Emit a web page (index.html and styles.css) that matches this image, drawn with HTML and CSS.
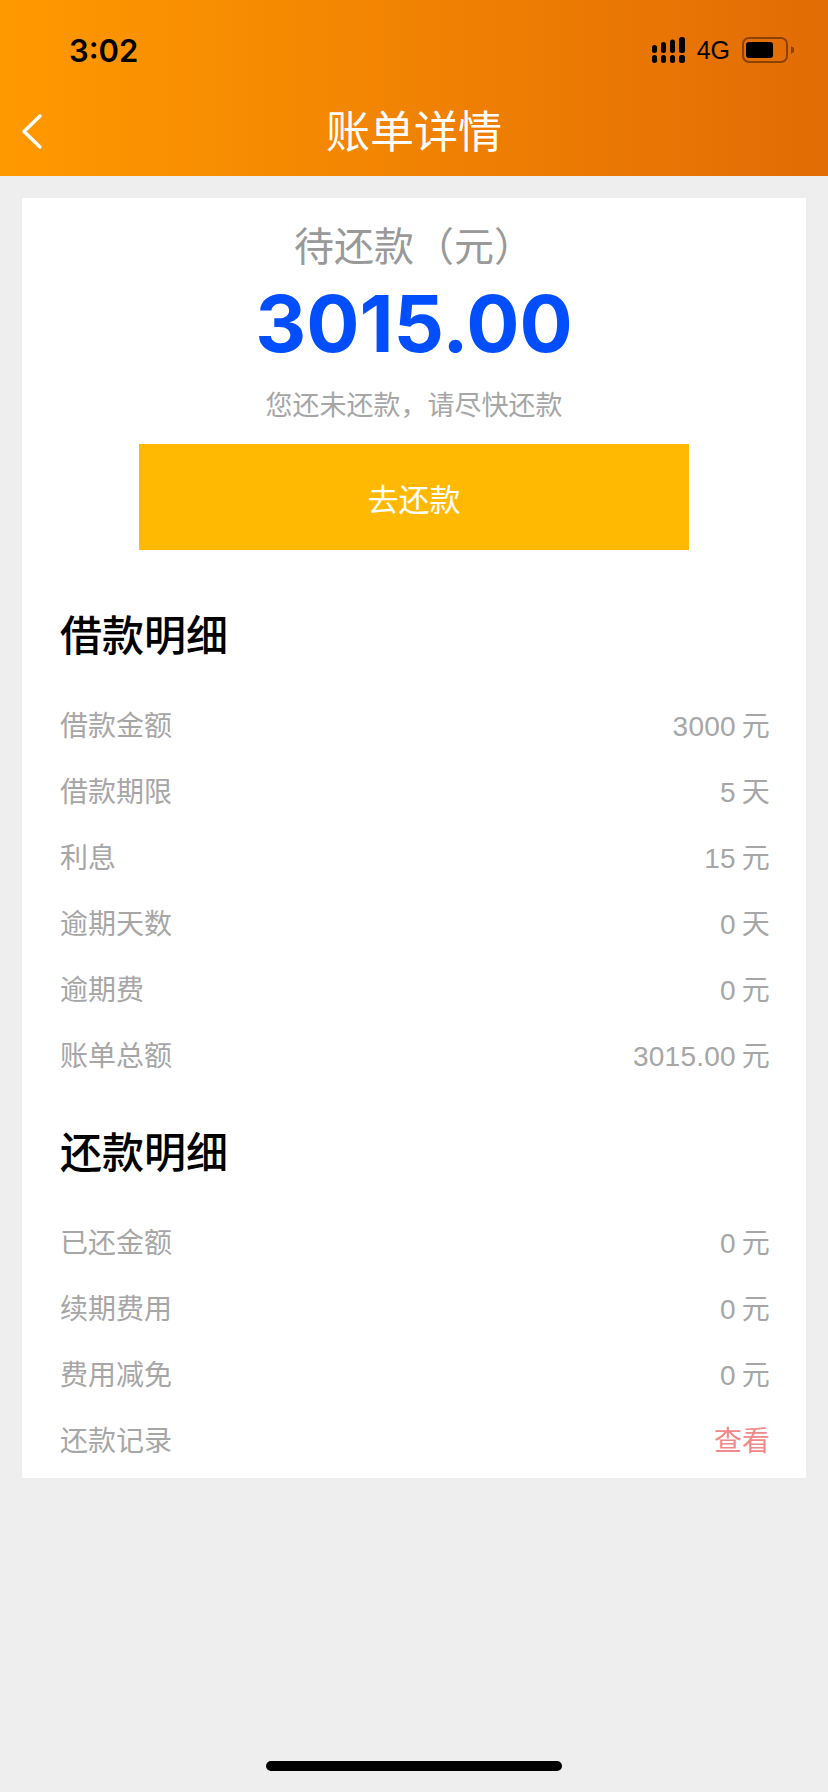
FILE: index.html
```html
<!DOCTYPE html>
<html lang="zh-CN">

<head>
    <meta charset="utf-8">
    <meta name="viewport" content="width=device-width, initial-scale=1.0">
    <title>账单详情</title>
    <link rel="stylesheet" href="styles.css">
</head>

<body>
    <header class="top">
        <div class="status">
            <span class="time">3:02</span>
            <div class="status-right">
                <svg class="signal" width="33" height="26" viewBox="0 0 33 26">
                    <rect x="0" y="8" width="5" height="8" rx="2.500" />
                    <rect x="9" y="5" width="5" height="11" rx="2.500" />
                    <rect x="18" y="2.500" width="5" height="13.500" rx="2.500" />
                    <rect x="27" y="0" width="6" height="16" rx="2.500" />
                    <rect x="0" y="18" width="5" height="8" rx="2.500" />
                    <rect x="9" y="18" width="5" height="8" rx="2.500" />
                    <rect x="18" y="18" width="5" height="8" rx="2.500" />
                    <rect x="27" y="18" width="6" height="8" rx="2.500" />
                </svg>
                <span class="net">4G</span>
                <svg class="battery" width="52" height="26" viewBox="0 0 52 26">
                    <rect x="1" y="1" width="44" height="24" rx="6" fill="none" stroke="#000" stroke-opacity="0.4" stroke-width="2" />
                    <rect x="4" y="5" width="27" height="16" rx="3" />
                    <path d="M49 9 L52 11 L52 15 L49 17 Z" fill="#000" fill-opacity="0.4" />
                </svg>
            </div>
        </div>
        <div class="nav">
            <svg class="back" width="24" height="38" viewBox="0 0 24 38">
                <path d="M20 4 L4 19.500 L20 35" fill="none" stroke="#fff" stroke-width="3.500" stroke-linecap="round" stroke-linejoin="round" />
            </svg>
            <h1>账单详情</h1>
        </div>
    </header>

    <main class="card">
        <section class="summary">
            <div class="due-label">待还款（元）</div>
            <div class="due-amount">3015.00</div>
            <div class="due-note">您还未还款，请尽快还款</div>
            <button class="pay">去还款</button>
        </section>

        <section class="detail">
            <h2>借款明细</h2>
            <div class="row"><span>借款金额</span><span class="val">3000&thinsp;元</span></div>
            <div class="row"><span>借款期限</span><span class="val">5&thinsp;天</span></div>
            <div class="row"><span>利息</span><span class="val">15&thinsp;元</span></div>
            <div class="row"><span>逾期天数</span><span class="val">0&thinsp;天</span></div>
            <div class="row"><span>逾期费</span><span class="val">0&thinsp;元</span></div>
            <div class="row"><span>账单总额</span><span class="val">3015.00&thinsp;元</span></div>
        </section>

        <section class="detail">
            <h2>还款明细</h2>
            <div class="row"><span>已还金额</span><span class="val">0&thinsp;元</span></div>
            <div class="row"><span>续期费用</span><span class="val">0&thinsp;元</span></div>
            <div class="row"><span>费用减免</span><span class="val">0&thinsp;元</span></div>
            <div class="row"><span>还款记录</span><span class="link">查看</span></div>
        </section>
    </main>

    <div class="home-bar"></div>
</body>

</html>
```

FILE: styles.css
```css
html {
    height: 100%;
}

body {
    margin: 0;
    min-height: 1792px;
    display: flex;
    flex-direction: column;
    background-color: #eeeeee;
    font-family: "Liberation Sans", "Noto Sans CJK SC", sans-serif;
}

.top {
    height: 176px;
    box-sizing: border-box;
    padding-top: 28px;
    background: linear-gradient(90deg, #ff9900, #e26c05);
}

.status {
    height: 44px;
    display: flex;
    align-items: center;
    justify-content: space-between;
    padding: 0 34px 0 69px;
}

.time {
    font-family: Inter, sans-serif;
    font-size: 31px;
    font-weight: 600;
    color: #000;
}

.status-right {
    display: flex;
    align-items: center;
    gap: 12px;
}

.net {
    font-size: 25px;
    color: #000;
}

.nav {
    height: 104px;
    box-sizing: border-box;
    padding-top: 9px;
    display: flex;
    align-items: center;
    justify-content: center;
    position: relative;
}

.back {
    position: absolute;
    left: 20px;
    top: 40px;
}

h1 {
    margin: 0;
    font-size: 44px;
    font-weight: normal;
    color: #fff;
}

.card {
    margin: 22px 22px 0;
    padding-bottom: 6px;
    background-color: #fff;
}

.summary {
    display: flex;
    flex-direction: column;
    align-items: center;
}

.due-label {
    margin-top: 24px;
    font-size: 40px;
    line-height: 50px;
    color: #999;
}

.due-amount {
    margin-top: 6px;
    font-family: Inter, sans-serif;
    font-size: 79px;
    line-height: 90px;
    font-weight: 700;
    color: #034efc;
}

.due-note {
    margin-top: 18px;
    font-size: 27px;
    line-height: 40px;
    color: #a6a6a6;
}

.pay {
    width: 550px;
    height: 106px;
    margin-top: 18px;
    border: none;
    background-color: #ffb903;
    color: #fff;
    font-family: inherit;
    font-size: 31px;
}

.detail {
    padding: 0 36px 0 38px;
}

.detail h2 {
    margin: 0;
    padding: 60px 0 28px;
    font-size: 42px;
    line-height: 52px;
    font-weight: 500;
    color: #000;
}

.summary + .detail h2 {
    padding-top: 61px;
}

.detail + .detail h2 {
    padding-top: 41px;
}

.row {
    height: 66px;
    display: flex;
    align-items: center;
    justify-content: space-between;
    font-size: 28px;
    color: #a6a6a6;
}

.val {
    letter-spacing: 0.25px;
}

.link {
    color: #f08a8a;
}

.home-bar {
    width: 296px;
    height: 10px;
    margin: auto auto 21px;
    border-radius: 5px;
    background-color: #000;
}
```
